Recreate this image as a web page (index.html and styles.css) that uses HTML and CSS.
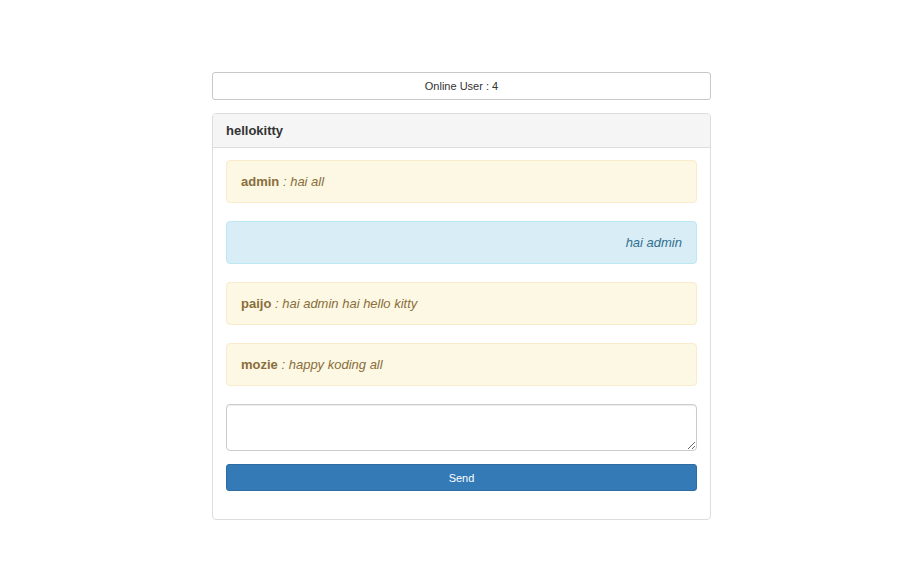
FILE: index.html
```html
<!DOCTYPE html>
<html>
<head>
<meta charset="utf-8">
<link rel="stylesheet" href="styles.css">
</head>
<body>
<div class="wrap">
  <div class="online">Online User : 4</div>
  <div class="panel">
    <div class="panel-heading">hellokitty</div>
    <div class="panel-body">
      <div class="alert warn"><b>admin</b> <i>: hai all</i></div>
      <div class="alert info right"><i>hai admin</i></div>
      <div class="alert warn"><b>paijo</b> <i>: hai admin hai hello kitty</i></div>
      <div class="alert warn"><b>mozie</b> <i>: happy koding all</i></div>
      <textarea class="msg"></textarea>
      <button class="send">Send</button>
    </div>
  </div>
</div>
</body>
</html>
```
FILE: styles.css
```css
* { box-sizing: border-box; }
html, body { margin: 0; padding: 0; background: #fff; }
body { font-family: "Liberation Sans", Arial, sans-serif; color: #333; padding-right: 1px; }
.wrap {
  width: 499px;
  margin: 72px auto 0;
  display: flex;
  flex-direction: column;
  gap: 13px;
}
.online {
  height: 28px;
  border: 1px solid #c8c8c8;
  border-radius: 3px;
  font-size: 11px;
  line-height: 26px;
  text-align: center;
  color: #333;
}
.panel {
  border: 1px solid #ddd;
  border-radius: 4px;
  background: #fff;
}
.panel-heading {
  height: 34px;
  background: #f5f5f5;
  border-bottom: 1px solid #ddd;
  border-radius: 3px 3px 0 0;
  padding: 0 13px;
  font-size: 13px;
  font-weight: bold;
  line-height: 33px;
  color: #333;
}
.panel-body {
  padding: 12px 13px 28px;
  display: flex;
  flex-direction: column;
  gap: 18px;
}
.alert {
  height: 43px;
  padding: 0 14px;
  border: 1px solid;
  border-radius: 4px;
  font-size: 13px;
  line-height: 41px;
}
.alert b { font-weight: bold; }
.warn { background: #fcf8e3; border-color: #faebcc; color: #8a6d3b; }
.info { background: #d9edf7; border-color: #bce8f1; color: #31708f; }
.right { text-align: right; }
.msg {
  display: block;
  width: 100%;
  height: 47px;
  border: 1px solid #ccc;
  border-radius: 4px;
  box-shadow: inset 0 1px 1px rgba(0,0,0,.075);
  font-family: inherit;
  margin: 0;
}
.send {
  display: block;
  width: 100%;
  height: 27px;
  margin-top: -5px;
  background: #337ab7;
  border: 1px solid #2e6da4;
  border-radius: 3px;
  color: #fff;
  font-family: inherit;
  font-size: 11px;
  padding: 0;
}
```
